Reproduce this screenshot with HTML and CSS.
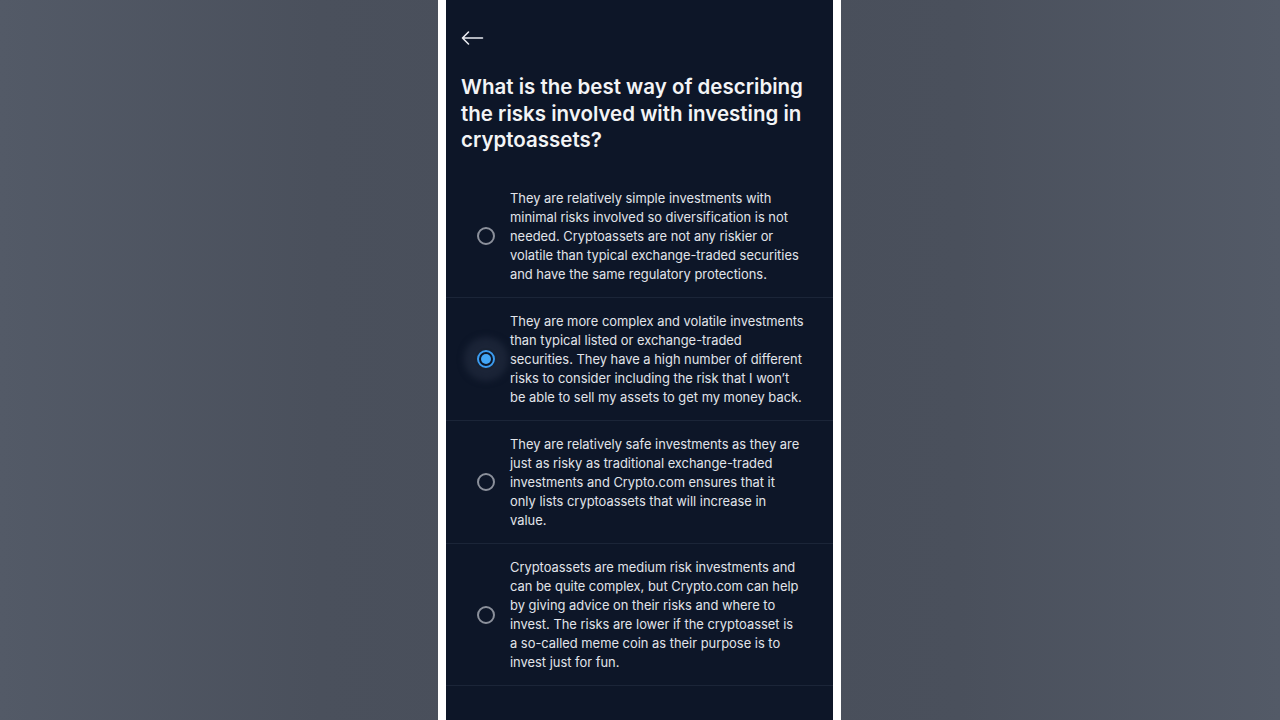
FILE: index.html
```html
<!DOCTYPE html>
<html lang="en">
<head>
<meta charset="utf-8">
<title>Quiz</title>
<link rel="stylesheet" href="styles.css">
</head>
<body>
<div class="stage">
  <div class="phone">
    <div class="screen">
      <div class="topbar">
        <svg class="back" width="23" height="16" viewBox="0 0 23 16" fill="none" stroke="#e8eaef" stroke-width="1.6" stroke-linecap="round" stroke-linejoin="round">
          <path d="M21.5 8H1.5M7.5 2L1.5 8l6 6"/>
        </svg>
      </div>
      <h1 class="title">What is the best way of describing the risks involved with investing in cryptoassets?</h1>
      <ul class="options">
        <li class="option">
          <span class="radio"></span>
          <p class="text">They are relatively simple investments with<br>minimal risks involved so diversification is not<br>needed. Cryptoassets are not any riskier or<br>volatile than typical exchange-traded securities<br>and have the same regulatory protections.</p>
        </li>
        <li class="option selected">
          <span class="radio"><span class="dot"></span></span>
          <p class="text">They are more complex and volatile investments<br>than typical listed or exchange-traded<br>securities. They have a high number of different<br>risks to consider including the risk that I won’t<br>be able to sell my assets to get my money back.</p>
        </li>
        <li class="option">
          <span class="radio"></span>
          <p class="text">They are relatively safe investments as they are<br>just as risky as traditional exchange-traded<br>investments and Crypto.com ensures that it<br>only lists cryptoassets that will increase in<br>value.</p>
        </li>
        <li class="option">
          <span class="radio"></span>
          <p class="text">Cryptoassets are medium risk investments and<br>can be quite complex, but Crypto.com can help<br>by giving advice on their risks and where to<br>invest. The risks are lower if the cryptoasset is<br>a so-called meme coin as their purpose is to<br>invest just for fun.</p>
        </li>
      </ul>
    </div>
  </div>
</div>
</body>
</html>
```

FILE: styles.css
```css
* { box-sizing: border-box; }
html, body {
  margin: 0;
  padding: 0;
  height: 100%;
}
body {
  background: linear-gradient(90deg, #535a67 0%, #4a505c 25%, #484e5a 50%, #4a505c 75%, #535a67 100%);
  font-family: Inter, "Noto Sans", sans-serif;
  overflow: hidden;
}
.stage {
  height: 720px;
  display: flex;
  justify-content: center;
}
.phone {
  width: 403px;
  height: 720px;
  margin-left: -1px;
  background: #ffffff;
  padding: 0 8px;
}
.screen {
  height: 100%;
  background: #0d1628;
}
.topbar {
  height: 74px;
  padding: 30px 0 0 15px;
}
.back { display: block; }
.title {
  margin: 0;
  padding: 0 20px 0 15px;
  font-size: 20.5px;
  line-height: 26.5px;
  font-weight: 600;
  color: #f3f4f6;
}
.options {
  list-style: none;
  margin: 21px 0 0;
  padding: 0;
}
.option {
  display: flex;
  align-items: center;
  padding: 14px 10px 13px 31px;
  border-bottom: 1px solid #1b2538;
}
.radio {
  position: relative;
  flex: 0 0 18px;
  width: 18px;
  height: 18px;
  border: 2px solid #8b909b;
  border-radius: 50%;
  margin-right: 15px;
}
.selected .radio {
  border-color: #3c9cf0;
  box-shadow: 0 0 0 2px #1a2333, 0 0 6px 13px #1b2437;
}
.dot {
  position: absolute;
  left: 2px;
  top: 2px;
  width: 10px;
  height: 10px;
  border-radius: 50%;
  background: #42a5f5;
}
.text {
  margin: 0;
  font-size: 12.9px;
  line-height: 19px;
  color: #e1e4ea;
  white-space: nowrap;
}
```
